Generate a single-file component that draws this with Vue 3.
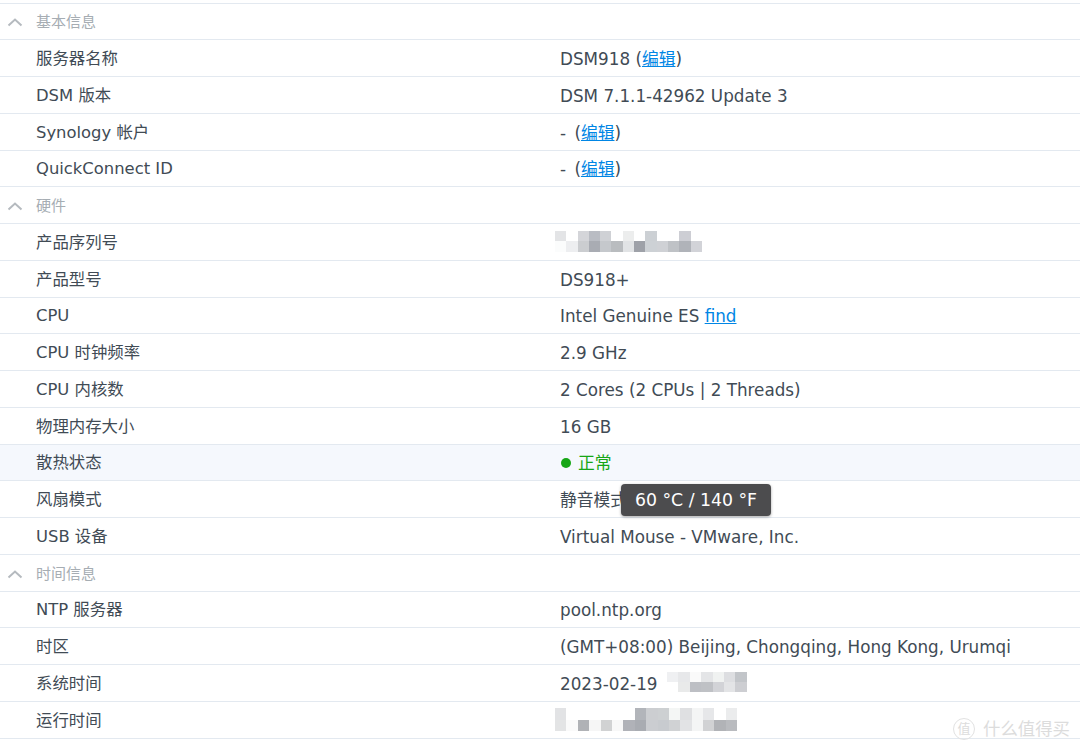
<script setup>
const W = '#ffffff'
const mosaicA = { cols: 13, size: 11.3, rowH: [9.5, 11.5], cells: ['#e3e4e6',W,'#d4d5d9','#b9bcc3','#cfd1d5',W,'#eceded',W,'#ccd0d4',W,W,'#cdced4',W,'#fbfcfc','#edeef0','#cbcdd0','#a9acb3','#c5c8cc','#b9bcbf','#e1e3e5','#9ea1a8','#cdd1d5','#cfd1d5','#bfc2c6','#b0b3b9','#d2d3d8'] }
const mosaicB = { cols: 7, size: 11.4, rowH: [10, 10], cells: ['#eff0f2','#e7e8ea','#fafafa','#e4e5e7','#f0f2f1','#dddee1','#c2c5c9',W,'#e9eaea','#bdbfc4','#bfc1c5','#d2d3d7','#e3e4e6','#cdced2'] }
const mosaicC = { cols: 16, size: 11.4, rowH: [11.5, 11.5], cells: ['#e2e3e5',W,W,W,W,W,W,'#b2b5ba','#ccced1','#cdd0d2','#f4f6f5','#dfe0e2','#f4f5f5','#e6e7e9',W,'#ebeced','#e3e4e5','#fafafa','#b0b2b6','#f6f6f6','#d1d2d3','#f8f8f8','#b0b2b8','#a9acb2','#cbcdd1','#c8cbcf','#d0d2d4','#e2e3e5','#f4f5f5','#d1d2d4','#b1b3b7','#b9bbbf'] }

const rows = [
  { head: '基本信息' },
  { label: '服务器名称', value: 'DSM918 (', link: '编辑', after: ')' },
  { label: 'DSM 版本', value: 'DSM 7.1.1-42962 Update 3' },
  { label: 'Synology 帐户', value: '- (', link: '编辑', after: ')', dash: true },
  { label: 'QuickConnect ID', value: '- (', link: '编辑', after: ')', dash: true },
  { head: '硬件' },
  { label: '产品序列号', mosaic: mosaicA, mosaicClass: 'm-a' },
  { label: '产品型号', value: 'DS918+' },
  { label: 'CPU', value: 'Intel Genuine ES ', link: 'find' },
  { label: 'CPU 时钟频率', value: '2.9 GHz' },
  { label: 'CPU 内核数', value: '2 Cores (2 CPUs | 2 Threads)' },
  { label: '物理内存大小', value: '16 GB' },
  { label: '散热状态', status: '正常', hover: true },
  { label: '风扇模式', value: '静音模式', tip: '60 °C / 140 °F' },
  { label: 'USB 设备', value: 'Virtual Mouse - VMware, Inc.' },
  { head: '时间信息' },
  { label: 'NTP 服务器', value: 'pool.ntp.org' },
  { label: '时区', value: '(GMT+08:00) Beijing, Chongqing, Hong Kong, Urumqi' },
  { label: '系统时间', value: '2023-02-19', mosaic: mosaicB, mosaicClass: 'm-b' },
  { label: '运行时间', mosaic: mosaicC, mosaicClass: 'm-c' },
]

function gridStyle(m) {
  return {
    gridTemplateColumns: `repeat(${m.cols}, ${m.size}px)`,
    gridTemplateRows: m.rowH.map((h) => h + 'px').join(' '),
  }
}
</script>

<template>
  <div class="page">
    <div class="table">
      <div
        v-for="(r, i) in rows"
        :key="i"
        class="row"
        :class="{ head: r.head, hover: r.hover }"
      >
        <template v-if="r.head">
          <svg class="chev" width="16" height="10" viewBox="0 0 16 10">
            <path d="M1.5 8.5 L8 2.5 L14.5 8.5" fill="none" stroke="#b5babf" stroke-width="2" />
          </svg>
          <span class="head-text">{{ r.head }}</span>
        </template>
        <template v-else>
          <div class="label">{{ r.label }}</div>
          <div class="value">
            <template v-if="r.status">
              <span class="dot"></span><span class="ok">{{ r.status }}</span>
            </template>
            <template v-else>
              <span v-if="r.value" class="pre" :class="{ dash: r.dash }">{{ r.value }}</span>
              <a v-if="r.link" class="link">{{ r.link }}</a>
              <span v-if="r.after">{{ r.after }}</span>
              <span
                v-if="r.mosaic"
                class="mosaic"
                :class="r.mosaicClass"
                :style="gridStyle(r.mosaic)"
              >
                <i v-for="(c, k) in r.mosaic.cells" :key="k" :style="{ background: c }"></i>
              </span>
            </template>
            <div v-if="r.tip" class="tip">{{ r.tip }}</div>
          </div>
        </template>
      </div>
    </div>
    <div class="mark">
      <span class="mark-logo">值</span>
      <span class="mark-text">什么值得买</span>
    </div>
  </div>
</template>

<style scoped>
.page {
  position: relative;
  width: 1080px;
  height: 751px;
  overflow: hidden;
  background: #ffffff;
  padding-top: 2.5px;
  box-sizing: border-box;
  font-family: "DejaVu Sans", "Noto Sans CJK SC", sans-serif;
  font-size: 16px;
  line-height: 20px;
  color: #414b55;
}
.table {
  border-top: 1px solid #e3e9f0;
}
.row {
  display: flex;
  align-items: center;
  height: 36.75px;
  padding-top: 2px;
  box-sizing: border-box;
  border-bottom: 1px solid #e3e9f0;
}
.hover {
  background: #f5f8fd;
}
.chev {
  margin-left: 7px;
  margin-right: 13px;
}
.head-text {
  font-size: 15px;
  color: #a6adb3;
}
.label {
  width: 560px;
  padding-left: 36px;
  box-sizing: border-box;
  flex: none;
  font-size: 16.4px;
}
.value {
  position: relative;
  display: flex;
  align-items: center;
  flex: 1;
  height: 100%;
  font-size: 16.8px;
}
.pre {
  white-space: pre;
}
.dash {
  word-spacing: 3px;
}
.link {
  color: #0086e5;
  text-decoration: underline;
}
.dot {
  width: 10px;
  height: 10px;
  border-radius: 50%;
  background: #16a616;
  margin-left: 1px;
  margin-right: 7px;
}
.ok {
  color: #16a616;
}
.mosaic {
  display: inline-grid;
}
.mosaic i {
  display: block;
}
.m-a {
  margin-left: -5px;
  margin-top: -2px;
}
.m-b {
  margin-left: 9.5px;
  margin-top: -4px;
}
.m-c {
  margin-left: -5px;
  margin-top: -2px;
}
.tip {
  position: absolute;
  left: 61px;
  top: 1px;
  height: 32px;
  line-height: 32px;
  padding: 0 14px;
  font-size: 17.3px;
  background: #4c4c4e;
  color: #ffffff;
  border-radius: 4px;
  box-shadow: 0 1px 3px rgba(0, 0, 0, 0.35);
  white-space: nowrap;
}
.mark {
  position: absolute;
  right: 10px;
  top: 718px;
  display: flex;
  align-items: center;
  gap: 8px;
  color: #dcdcdc;
  font-size: 17.4px;
}
.mark-logo {
  width: 20px;
  height: 20px;
  line-height: 20px;
  text-align: center;
  border: 1.5px solid #e2e2e2;
  border-radius: 50%;
  font-size: 13px;
}
</style>

<style>
html, body { background: #ffffff; }
</style>
